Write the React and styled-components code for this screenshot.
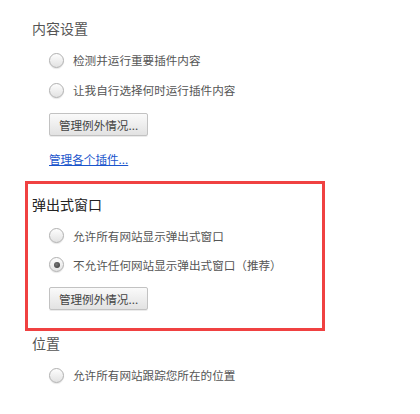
import React, { useState } from 'react';
import styled, { createGlobalStyle } from 'styled-components';

const GlobalStyle = createGlobalStyle`
  body {
    margin: 0;
    background: #fff;
    font-family: "Noto Sans CJK SC", "Liberation Sans", sans-serif;
  }
`;

const App = () => {
  const [plugins, setPlugins] = useState('');
  const [popups, setPopups] = useState('block');
  const [location, setLocation] = useState('');

  return (
    <Page>
      <GlobalStyle />
      <Section>
        <Heading>内容设置</Heading>
        <Options>
          <RadioRow onClick={() => setPlugins('detect')}>
            <RadioDot checked={plugins === 'detect'} />
            <RadioLabel>检测并运行重要插件内容</RadioLabel>
          </RadioRow>
          <RadioRow onClick={() => setPlugins('ask')}>
            <RadioDot checked={plugins === 'ask'} />
            <RadioLabel>让我自行选择何时运行插件内容</RadioLabel>
          </RadioRow>
          <ManageButton type="button">管理例外情况...</ManageButton>
          <Link href="#">管理各个插件...</Link>
        </Options>
      </Section>

      <HighlightBox>
        <Heading dark>弹出式窗口</Heading>
        <Options>
          <RadioRow tight onClick={() => setPopups('allow')}>
            <RadioDot checked={popups === 'allow'} />
            <RadioLabel>允许所有网站显示弹出式窗口</RadioLabel>
          </RadioRow>
          <RadioRow tight onClick={() => setPopups('block')}>
            <RadioDot checked={popups === 'block'} />
            <RadioLabel>不允许任何网站显示弹出式窗口（推荐）</RadioLabel>
          </RadioRow>
          <ManageButton type="button">管理例外情况...</ManageButton>
        </Options>
      </HighlightBox>

      <Section last>
        <Heading>位置</Heading>
        <Options>
          <RadioRow onClick={() => setLocation('allow')}>
            <RadioDot checked={location === 'allow'} />
            <RadioLabel>允许所有网站跟踪您所在的位置</RadioLabel>
          </RadioRow>
        </Options>
      </Section>
    </Page>
  );
};

export default App;

const Page = styled.div`
  width: 420px;
  height: 414px;
  box-sizing: border-box;
  padding: 18px 0 0 25px;
  overflow: hidden;
`;

const Section = styled.div`
  width: 300px;
  box-sizing: border-box;
  padding: 0 7px;
  margin-top: ${(props) => (props.last ? '2px' : '0')};
`;

const HighlightBox = styled.div`
  width: 300px;
  height: 150px;
  box-sizing: border-box;
  margin-top: 14px;
  padding: 10px 4px 0;
  border: 3px solid #f04141;
`;

const Heading = styled.div`
  font-size: 14px;
  line-height: 20px;
  color: ${(props) => (props.dark ? '#222' : '#555')};
`;

const Options = styled.div`
  display: flex;
  flex-direction: column;
  align-items: flex-start;
  padding-left: 17px;
  margin-top: 7px;
`;

const RadioRow = styled.label`
  display: flex;
  align-items: center;
  gap: 9px;
  height: ${(props) => (props.tight ? '29px' : '30px')};
  cursor: pointer;
`;

const RadioDot = styled.span`
  position: relative;
  flex: none;
  width: 15px;
  height: 15px;
  box-sizing: border-box;
  border-radius: 50%;
  border: 1px solid #b0b0b0;
  background: linear-gradient(#fdfdfd, #e2e2e2);
  box-shadow: 0 1px 1px rgba(0, 0, 0, 0.1);

  &::after {
    content: '';
    display: ${(props) => (props.checked ? 'block' : 'none')};
    position: absolute;
    left: 3.5px;
    top: 3.5px;
    width: 6px;
    height: 6px;
    border-radius: 50%;
    background: radial-gradient(circle at 40% 40%, #777, #333);
  }
`;

const RadioLabel = styled.span`
  font-size: 11.6px;
  color: #555;
  white-space: nowrap;
`;

const ManageButton = styled.button`
  margin-top: 8px;
  width: 99px;
  height: 23px;
  padding: 0 8px;
  font-family: inherit;
  font-size: 11.6px;
  color: #444;
  border: 1px solid #c2c2c2;
  border-radius: 2px;
  background: linear-gradient(#fafafa, #e2e2e2);
  box-shadow: 0 1px 0 rgba(0, 0, 0, 0.08);
  white-space: nowrap;
  cursor: pointer;
`;

const Link = styled.a`
  margin-top: 15px;
  font-size: 11.6px;
  line-height: 16px;
  color: #1a55cc;
  text-decoration: underline;
`;
